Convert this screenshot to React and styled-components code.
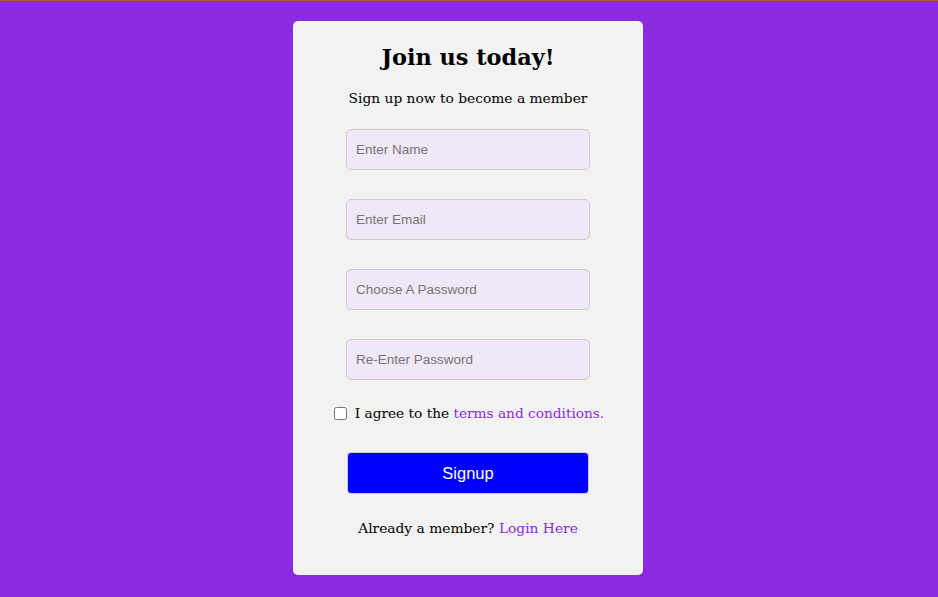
import React from "react";
import styled, { createGlobalStyle } from "styled-components";

const GlobalStyle = createGlobalStyle`
  html, body {
    margin: 0;
    padding: 0;
  }
  body {
    background: #8a2be2;
    border-top: 1px solid #b8503f;
    font-family: "DejaVu Serif", Georgia, serif;
    min-height: 596px;
  }
`;

function App() {
  return (
    <>
      <GlobalStyle />
      <Page>
        <Card>
          <Title>Join us today!</Title>
          <Subtitle>Sign up now to become a member</Subtitle>
          <Form onSubmit={(e) => e.preventDefault()}>
            <Input type="text" placeholder="Enter Name" />
            <Input type="email" placeholder="Enter Email" />
            <Input type="password" placeholder="Choose A Password" />
            <Input type="password" placeholder="Re-Enter Password" />
            <Agree>
              <Check type="checkbox" />
              <span>
                I agree to the <Link href="#">terms and conditions.</Link>
              </span>
            </Agree>
            <Button type="submit">Signup</Button>
          </Form>
          <Footer>
            Already a member? <Link href="#">Login Here</Link>
          </Footer>
        </Card>
      </Page>
    </>
  );
}

const Page = styled.main`
  display: flex;
  justify-content: center;
  padding-top: 20px;
  padding-right: 2px;
`;

const Card = styled.div`
  width: 350px;
  box-sizing: border-box;
  background: #f2f2f2;
  border-radius: 5px;
  padding: 21px 0 37px;
  display: flex;
  flex-direction: column;
  align-items: center;
  color: #000;
`;

const Title = styled.h1`
  margin: 0;
  font-size: 22.4px;
  line-height: 30px;
  font-weight: bold;
`;

const Subtitle = styled.p`
  margin: 16px 0 0;
  font-size: 13.8px;
  line-height: 20px;
`;

const Form = styled.form`
  align-self: stretch;
  margin-top: 21px;
  display: flex;
  flex-direction: column;
  align-items: center;
  gap: 29px;
`;

const Input = styled.input`
  width: 244px;
  height: 41px;
  box-sizing: border-box;
  padding: 0 9px;
  border: 1px solid #cccccc;
  border-radius: 5px;
  background: #f0e8f7;
  font-family: "Liberation Sans", Arial, sans-serif;
  font-size: 13.5px;
  outline: none;
  &::placeholder {
    color: #757575;
  }
`;

const Agree = styled.label`
  display: flex;
  align-items: center;
  gap: 8px;
  margin-top: -6px;
  padding-left: 2px;
  font-size: 13.7px;
  line-height: 20px;
`;

const Check = styled.input`
  width: 13px;
  height: 13px;
  margin: 0;
`;

const Link = styled.a`
  color: #8a2be2;
  text-decoration: none;
`;

const Button = styled.button`
  width: 242px;
  height: 42px;
  box-sizing: border-box;
  margin-top: 0;
  border: 1px solid #ccc;
  border-radius: 4px;
  background: #0000ff;
  color: #fff;
  font-family: "Liberation Sans", Arial, sans-serif;
  font-size: 16.5px;
  cursor: pointer;
`;

const Footer = styled.p`
  margin: 24px 0 0;
  font-size: 13.8px;
  line-height: 20px;
`;

export default App;
